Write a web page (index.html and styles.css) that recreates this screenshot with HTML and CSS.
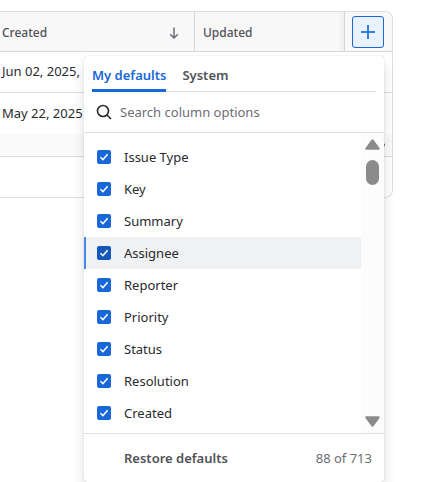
FILE: index.html
```html
<!DOCTYPE html>
<html lang="en">
<head>
<meta charset="utf-8">
<meta name="viewport" content="width=device-width, initial-scale=1">
<title>Issues</title>
<link rel="stylesheet" href="styles.css">
</head>
<body>
<main class="card">
  <table class="issues">
    <thead>
      <tr>
        <th class="col-created" scope="col">
          <span class="head-cell">Created
            <svg class="sort" width="12" height="12" viewBox="0 0 12 12" aria-hidden="true"><path d="M6 .5v10.500M2.200 7.200 6 11l3.800-3.800"/></svg>
          </span>
        </th>
        <th class="col-updated" scope="col">Updated</th>
        <th class="col-add">
          <div class="picker">
            <button class="add" type="button" aria-label="Configure columns" aria-expanded="true">
              <svg width="14" height="14" viewBox="0 0 14 14" aria-hidden="true"><path d="M7 0v14M0 7h14"/></svg>
            </button>
            <section class="popup" aria-label="Column options">
              <div class="tabs" role="tablist">
                <button class="tab tab-active" type="button" role="tab" aria-selected="true">My defaults</button>
                <button class="tab" type="button" role="tab" aria-selected="false">System</button>
              </div>
              <label class="search">
                <svg width="16" height="16" viewBox="0 0 16 16" aria-hidden="true"><circle cx="7" cy="7" r="5.500"/><path d="m11 11 4 4"/></svg>
                <input type="search" placeholder="Search column options" aria-label="Search column options">
              </label>
              <div class="list">
                <div class="options">
                  <label class="option"><input type="checkbox" checked>Issue Type</label>
                  <label class="option"><input type="checkbox" checked>Key</label>
                  <label class="option"><input type="checkbox" checked>Summary</label>
                  <label class="option option-active"><input type="checkbox" checked>Assignee</label>
                  <label class="option"><input type="checkbox" checked>Reporter</label>
                  <label class="option"><input type="checkbox" checked>Priority</label>
                  <label class="option"><input type="checkbox" checked>Status</label>
                  <label class="option"><input type="checkbox" checked>Resolution</label>
                  <label class="option"><input type="checkbox" checked>Created</label>
                </div>
                <div class="scrollbar" aria-hidden="true">
                  <svg width="15" height="11" viewBox="0 0 15 11"><path d="M7.500 1.200 13.700 9.700H1.300z"/></svg>
                  <span class="thumb"></span>
                  <svg class="arrow-down" width="15" height="11" viewBox="0 0 15 11"><path d="M1.300 1.300h12.400L7.500 9.800z"/></svg>
                </div>
              </div>
              <footer class="popup-foot">
                <button class="restore" type="button">Restore defaults</button>
                <span>88 of 713</span>
              </footer>
            </section>
          </div>
        </th>
      </tr>
    </thead>
    <tbody>
      <tr><td colspan="3">Jun 02, 2025,</td></tr>
      <tr><td colspan="3">May 22, 2025</td></tr>
    </tbody>
  </table>
  <div class="track" aria-hidden="true"><svg width="8" height="10" viewBox="0 0 8 10"><path d="M1 1v8l5-3V4z"/></svg></div>
  <div class="card-foot"></div>
</main>
</body>
</html>
```
FILE: styles.css
```css
* {
  box-sizing: border-box;
}

body {
  min-height: 100vh;
  margin: 0;
  padding: 11px 31px 0 0;
  background: #fff;
  color: #292a2e;
  font: 13px/20px "Noto Sans", sans-serif;
}

button,
input {
  font: inherit;
  color: inherit;
  margin: 0;
  padding: 0;
  border: 0;
  background: none;
}

.card {
  border: 1px solid #dddee1;
  border-left: 0;
  border-radius: 0 8px 8px 0;
}

.issues {
  width: 100%;
  table-layout: fixed;
  border-spacing: 0;
}

th {
  height: 40px;
  padding: 2px 8px 0;
  background: #f8f8f8;
  border-bottom: 1px solid #d5d6d9;
  color: #505258;
  font-size: 12px;
  font-weight: 500;
  text-align: left;
}

.col-created {
  width: auto;
  padding: 2px 14px 0 2px;
  border-right: 1px solid #d5d6d9;
}

.col-updated {
  width: 149px;
  background: linear-gradient(to left, #eeeeef, #f8f8f8 6px);
}

.col-add {
  width: 48px;
  padding: 0 8px 0 7px;
  border-left: 1px solid #d5d6d9;
  border-radius: 0 8px 0 0;
}

.head-cell {
  display: flex;
  align-items: center;
  justify-content: space-between;
}

.sort,
.add svg {
  fill: none;
  stroke: #6b6e76;
  stroke-width: 1.5;
}

td {
  height: 41px;
  padding: 0 2px 2px;
  font-size: 13px;
  white-space: nowrap;
}

tbody tr:first-child td {
  border-bottom: 1px solid #dddee1;
}

.track {
  display: flex;
  align-items: center;
  justify-content: flex-end;
  height: 23px;
  padding-right: 5px;
  background: #fafafa;
  border-bottom: 1px solid #dddee1;
}

.track svg {
  fill: #77787b;
}

.card-foot {
  height: 40px;
}

.picker {
  position: relative;
}

.add {
  display: grid;
  place-items: center;
  width: 32px;
  height: 32px;
  border: 1px solid #1868db;
  border-radius: 3px;
  background: #e9f2fe;
}

.add svg {
  stroke: #357de8;
  stroke-width: 2;
}

.popup {
  position: absolute;
  z-index: 1;
  top: calc(100% + 8px);
  right: 0;
  width: 300px;
  border-radius: 4px;
  background: #fff;
  box-shadow: 0 8px 12px #1e1f2126, 0 0 1px #1e1f214f;
  color: #292a2e;
  font-size: 13px;
  font-weight: 400;
}

.tabs {
  display: flex;
  gap: 16px;
  height: 36px;
  margin: 0 8px;
  border-bottom: 1px solid #dddee1;
}

.tab {
  height: 36px;
  padding-top: 6px;
  border-bottom: 3px solid transparent;
  color: #505258;
  font-weight: 600;
}

.tab-active {
  border-color: #1868db;
  color: #1868db;
}

.search {
  display: flex;
  align-items: center;
  gap: 8px;
  height: 41px;
  padding: 0 12px;
  border-bottom: 1px solid #dddee1;
}

.search svg {
  flex: none;
  fill: none;
  stroke: #292a2e;
  stroke-width: 1.6;
}

.search input {
  flex: 1;
  min-width: 0;
  outline: 0;
}

.search input::placeholder {
  color: #6b6e76;
  opacity: 1;
}

.list {
  display: flex;
  border-bottom: 1px solid #dddee1;
}

.options {
  flex: 1;
  padding: 8px 0 4px;
}

.option {
  display: flex;
  align-items: center;
  gap: 13px;
  height: 32px;
  padding-left: 11px;
  border-left: 2px solid transparent;
}

.option-active {
  border-color: #4688ec;
  background: #f0f1f2;
}

.option input {
  appearance: none;
  width: 14px;
  height: 14px;
  border-radius: 2px;
  background: #1868db url("data:image/svg+xml,%3Csvg xmlns='http://www.w3.org/2000/svg' viewBox='0 0 14 14'%3E%3Cpath d='m3.500 7.300 2.400 2.400 4.700-5.400' fill='none' stroke='white' stroke-width='1.600'/%3E%3C/svg%3E");
}

.option-active input {
  background-color: #1558bc;
}

.scrollbar {
  display: flex;
  flex-direction: column;
  align-items: center;
  width: 23px;
  padding: 6px 0;
  background: #fcfcfc;
}

.scrollbar svg {
  fill: #8b8b8b;
  stroke: #8b8b8b;
  stroke-width: 2;
  stroke-linejoin: round;
}

.thumb {
  width: 13px;
  height: 25px;
  margin-top: 10px;
  border-radius: 7px;
  background: #8b8b8b;
}

.arrow-down {
  margin-top: auto;
}

.popup-foot {
  display: flex;
  align-items: center;
  justify-content: space-between;
  height: 48px;
  padding: 0 12px 0 40px;
  color: #6b6e76;
}

.restore {
  color: #505258;
  font-weight: 600;
}
```
